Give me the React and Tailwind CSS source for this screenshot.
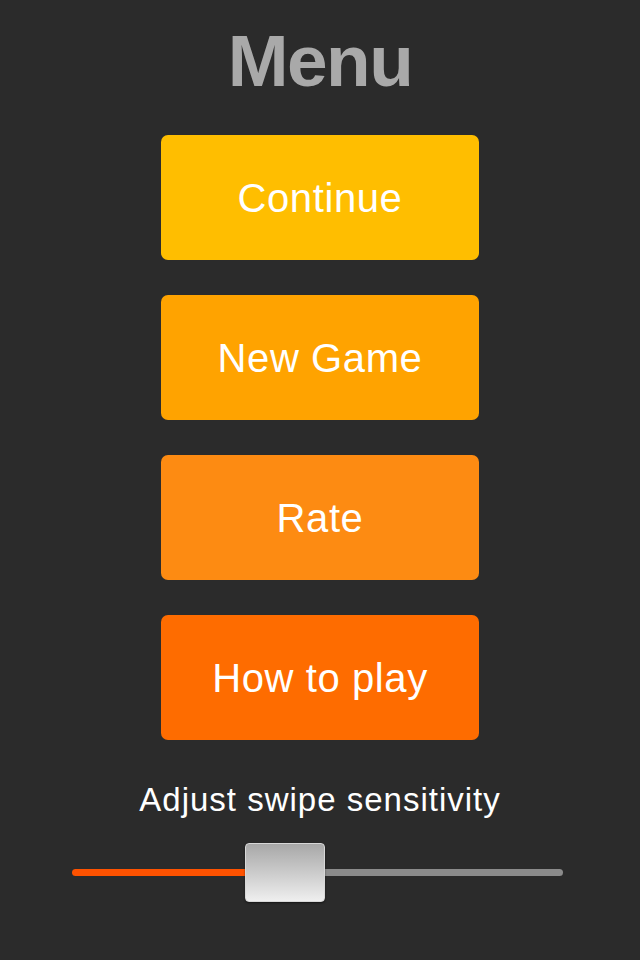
const buttons = [
  { label: "Continue", color: "bg-[#ffbe00]" },
  { label: "New Game", color: "bg-[#ffa300]" },
  { label: "Rate", color: "bg-[#fd8b12]" },
  { label: "How to play", color: "bg-[#fe6c00]" },
];

function Slider() {
  return (
    <div className="relative mt-[27px] ml-[72px] h-[59px] w-[491px]">
      <div className="flex h-full items-center">
        <div className="h-[7px] w-[180px] rounded-l-full bg-[#fe5200]" />
        <div className="h-[7px] flex-1 rounded-r-full bg-[#8b8b8b]" />
      </div>
      <div className="absolute left-[173px] top-0 h-[59px] w-[80px] rounded-[4px] border border-[#d8d8d8] bg-gradient-to-b from-[#a8a8a8] to-[#efefef] shadow-[0_1px_2px_rgba(0,0,0,0.5)]" />
    </div>
  );
}

export default function App() {
  return (
    <div
      className="flex h-[960px] w-[640px] flex-col bg-[#2b2b2b]"
      style={{ fontFamily: '"Liberation Sans", Arial, sans-serif' }}
    >
      <h1 className="mt-[24px] text-center text-[73px] font-bold leading-none tracking-[-1.5px] text-[#a9a9a9]">
        Menu
      </h1>
      <div className="mt-[38px] flex flex-col items-center gap-[35px]">
        {buttons.map((b) => (
          <button
            key={b.label}
            className={`flex h-[125px] w-[318px] items-center justify-center rounded-[7px] text-[40px] leading-none tracking-[0.6px] text-white ${b.color}`}
          >
            {b.label}
          </button>
        ))}
      </div>
      <p className="mt-[43px] text-center text-[33px] leading-none tracking-[1px] text-white">
        Adjust swipe sensitivity
      </p>
      <Slider />
    </div>
  );
}
